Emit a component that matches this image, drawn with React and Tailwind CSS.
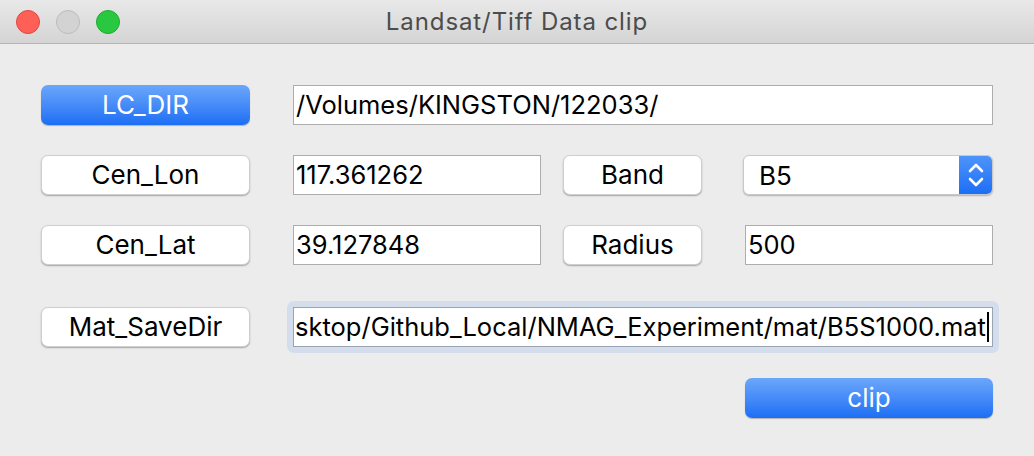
import { useState } from "react";

const font = { fontFamily: "Inter, 'Liberation Sans', sans-serif" };

const PushButton = ({ label, primary = false, width = "w-[209px]" }) => (
  <button
    className={`${width} h-10 shrink-0 rounded-[7px] text-[26px] leading-none ${
      primary
        ? "bg-gradient-to-b from-[#6ba6fa] to-[#1b6ef5] text-white shadow-[0_1px_1px_rgba(0,0,0,0.25)]"
        : "bg-white text-black border border-[#cfcfcf] shadow-[0_1px_1.5px_rgba(0,0,0,0.3)]"
    }`}
  >
    {label}
  </button>
);

const Field = ({ value, width }) => (
  <div
    className={`${width} h-10 shrink-0 bg-white border border-[#adadad] flex items-center pl-[2px] text-[25.5px] text-black overflow-hidden whitespace-nowrap`}
  >
    {value}
  </div>
);

const Popup = ({ value }) => (
  <div className="w-[250px] h-[40px] shrink-0 flex rounded-[6px] bg-white border border-[#c9c9c9] shadow-[0_1px_1.5px_rgba(0,0,0,0.25)] overflow-hidden">
    <div className="flex-1 flex items-center pl-[15px] text-[26px] text-black">{value}</div>
    <div className="w-[33px] bg-gradient-to-b from-[#4d93fa] to-[#1b6ef5] flex items-center justify-center">
      <svg width="18" height="28" viewBox="0 0 18 28" fill="none" stroke="white" strokeWidth="2.6" strokeLinecap="round" strokeLinejoin="round">
        <path d="M3 10 L9 4 L15 10" />
        <path d="M3 18 L9 24 L15 18" />
      </svg>
    </div>
  </div>
);

export default function App() {
  const [band] = useState("B5");

  return (
    <div className="w-[1034px] h-[456px] bg-[#ececec] flex flex-col overflow-hidden" style={font}>
      {/* title bar */}
      <div className="h-[44px] shrink-0 bg-gradient-to-b from-[#e9e9e9] to-[#d4d4d4] border-b border-[#b4b4b4] flex items-center relative">
        <div className="flex gap-4 pl-4">
          <span className="w-6 h-6 rounded-full bg-[#fe5f57] border border-[#e1463f]" />
          <span className="w-6 h-6 rounded-full bg-[#d3d3d3] border border-[#bcbcbc]" />
          <span className="w-6 h-6 rounded-full bg-[#28c840] border border-[#1ead2e]" />
        </div>
        <div className="absolute inset-0 flex items-center justify-center text-[24px] tracking-[0.9px] text-[#4c4c4c]">
          Landsat/Tiff Data clip
        </div>
      </div>

      <div className="flex flex-col pl-[41px] pt-[41px]">
        <div className="flex items-center gap-[43px]">
          <PushButton label="LC_DIR" primary />
          <Field value="/Volumes/KINGSTON/122033/" width="w-[700px]" />
        </div>

        <div className="flex items-center mt-[30px]">
          <PushButton label="Cen_Lon" />
          <div className="ml-[43px]">
            <Field value="117.361262" width="w-[248px]" />
          </div>
          <div className="ml-[22px]">
            <PushButton label="Band" width="w-[139px]" />
          </div>
          <div className="ml-[41px]">
            <Popup value={band} />
          </div>
        </div>

        <div className="flex items-center mt-[30px]">
          <PushButton label="Cen_Lat" />
          <div className="ml-[43px]">
            <Field value="39.127848" width="w-[248px]" />
          </div>
          <div className="ml-[22px]">
            <PushButton label="Radius" width="w-[139px]" />
          </div>
          <div className="ml-[43px]">
            <Field value="500" width="w-[248px]" />
          </div>
        </div>

        <div className="flex items-center mt-[36px]">
          <PushButton label="Mat_SaveDir" />
          <div className="ml-[37px] p-[6px] rounded-[7px] bg-[#d3ddec]">
            <div className="w-[700px] h-10 bg-white border border-[#98a3b6] flex items-center pl-[1px] text-[25.5px] text-black overflow-hidden whitespace-nowrap">
              sktop/Github_Local/NMAG_Experiment/mat/B5S1000.mat
              <span className="w-[2px] h-[30px] bg-black ml-[1px] shrink-0" />
            </div>
          </div>
        </div>

        <div className="flex justify-end mt-[25px] pr-[41px]">
          <PushButton label="clip" primary width="w-[248px]" />
        </div>
      </div>
    </div>
  );
}
